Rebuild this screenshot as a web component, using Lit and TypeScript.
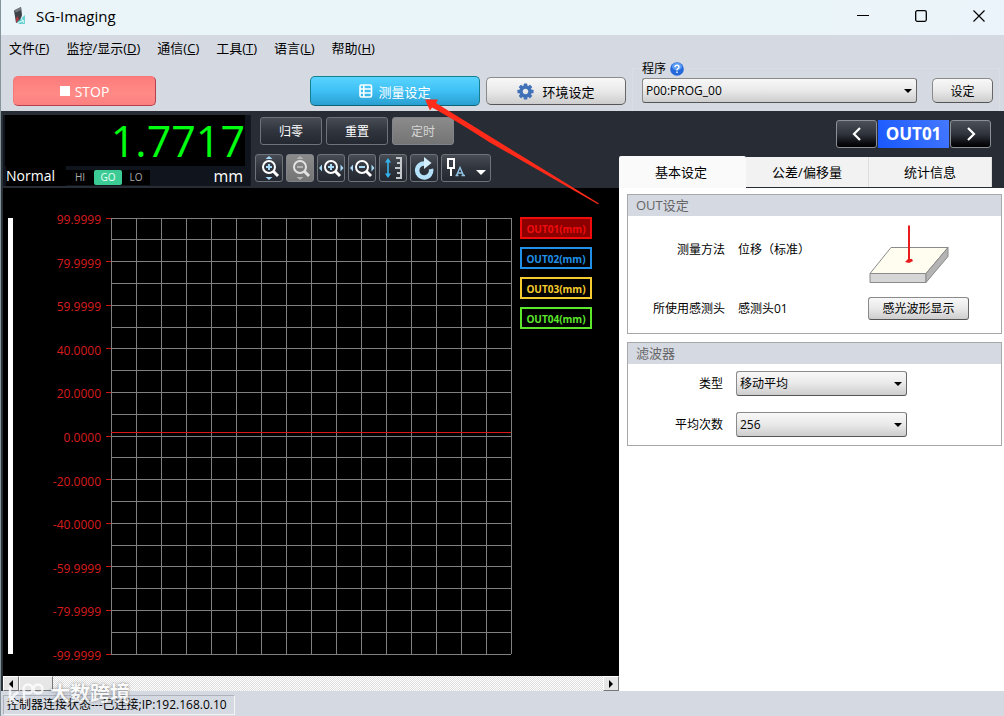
import { LitElement, html, css, svg, nothing } from "lit";
import { customElement, property, state } from "lit/decorators.js";
import { classMap } from "lit/directives/class-map.js";
import { styleMap } from "lit/directives/style-map.js";

const base = css`
  * { box-sizing: border-box; }
  button, select { font: inherit; margin: 0; padding: 0; cursor: default; }
  svg { display: block; }
  .silver {
    color: #000;
    border: 1px solid #777;
    border-color: #8a8a8a #666 #555 #8a8a8a;
    border-radius: 4px;
    background: linear-gradient(#f8f8f8, #e9e9e9 50%, #cdcdcd);
  }
`;

@customElement("sg-select")
export class SgSelect extends LitElement {
  @property() label = "";
  @property({ attribute: false }) options: string[] = [];

  static styles = [base, css`
    :host { display: grid; min-width: 0; }
    .box, .caret { grid-area: 1 / 1; }
    .box {
      appearance: none;
      width: 100%;
      height: 25px;
      padding: 0 20px 0 3px;
      border-radius: 3px;
      font-size: 12px;
    }
    .caret { justify-self: end; align-self: center; margin-right: 5px; pointer-events: none; }
  `];

  render() {
    return html`
      <select class="box silver" aria-label=${this.label}>
        ${this.options.map((o) => html`<option>${o}</option>`)}
      </select>
      <svg class="caret" width="8" height="4" viewBox="0 0 8 4"><path d="M0 0h8L4 4z" /></svg>
    `;
  }
}

@customElement("sg-header")
export class SgHeader extends LitElement {
  static styles = [base, css`
    :host { display: block; background: #d5d9e2; }
    .title {
      display: flex;
      align-items: center;
      gap: 12px;
      height: 35px;
      padding: 0 2px 3px 11px;
      background: linear-gradient(100deg, #eaf4f9, #e9f5f8 60%, #ebf4fa);
    }
    .name { display: flex; align-items: center; gap: 8px; flex: 1; font-size: 15px; line-height: 20px; }
    .win { width: 46px; height: 32px; border: 0; background: none; display: grid; place-items: center; }
    .menu { display: flex; gap: 17px; padding: 3px 8px; height: 26px; font-size: 13px; line-height: 20px; }
    .menu a { color: #000; text-decoration: none; white-space: nowrap; }
    .bar { display: grid; grid-template-columns: minmax(0, 1fr) 372px; height: 50px; }
    .left { display: flex; align-items: start; padding: 15px 6px 0 12px; }
    .stop, .measure, .env {
      display: flex;
      align-items: center;
      justify-content: center;
      gap: 5px;
      font-size: 13px;
      border-radius: 5px;
    }
    .stop {
      width: 143px;
      height: 30px;
      color: #fff;
      font-size: 14px;
      background: linear-gradient(#fc7c7c, #ff8a86 60%, #fb8080);
      border: 1px solid #f87878;
      border-right-color: #b8404c;
      border-bottom-color: #b8404c;
    }
    .call { position: relative; margin-left: auto; }
    .measure {
      width: 170px;
      height: 30px;
      color: #fff;
      border: 1px solid #157f92;
      border-bottom-color: #0c6478;
      background: linear-gradient(#58d4ff, #3fc0f4 50%, #2a9fd0);
    }
    .arrow { position: absolute; left: 115px; top: 22px; z-index: 5; pointer-events: none; }
    .env { width: 140px; height: 28px; margin: 1px 0 0 6px; gap: 8px; }
    .prog {
      margin: 7px 4px 0 0;
      border: 1px solid #dadde3;
      border-bottom: 0;
      padding: 9px 6px 0 9px;
      height: 43px;
      position: relative;
    }
    .legend {
      position: absolute;
      left: 9px;
      top: -8px;
      display: flex;
      align-items: center;
      gap: 4px;
      background: #d5d9e2;
      font-size: 12px;
      line-height: 16px;
      padding-right: 2px;
    }
    .row { display: flex; gap: 15px; align-items: center; }
    .row sg-select { flex: 1; }
    .set { width: 61px; height: 25px; font-size: 12px; border-radius: 5px; }
  `];

  private menus: [string, string][] = [
    ["文件", "F"], ["监控/显示", "D"], ["通信", "C"], ["工具", "T"], ["语言", "L"], ["帮助", "H"],
  ];

  render() {
    const teeth = [0, 45, 90, 135, 180, 225, 270, 315];
    return html`
      <div class="title">
        <span class="name">
          <svg width="16" height="18" viewBox="0 0 16 18">
            <path d="M2 3.500L9 0L10 8L8 14L4 16z" fill="#3c4147" />
            <path d="M2 3.500L9 0L9.300 3L4 5.500z" fill="#74797f" />
            <path d="M4 11l2-2 1 4-3 3z" fill="#a63a45" />
            <path d="M5 15L13 8V17H7z" fill="#4cc9c6" opacity=".8" />
            <path d="M6 15.500l6-2M9 11l3 5" stroke="#dcfafa" stroke-width="1" />
          </svg>
          SG-Imaging
        </span>
        <button class="win" aria-label="最小化"><svg width="12" height="12"><path d="M0 5.500h12" stroke="#000" /></svg></button>
        <button class="win" aria-label="最大化"><svg width="12" height="12"><rect x=".7" y=".7" width="10.600" height="10.600" rx="1.500" fill="none" stroke="#000" stroke-width="1.300" /></svg></button>
        <button class="win" aria-label="关闭"><svg width="12" height="12"><path d="M.5.500l11 11M11.500.500l-11 11" stroke="#000" stroke-width="1.200" /></svg></button>
      </div>
      <nav class="menu">
        ${this.menus.map(([t, k]) => html`<a href="#">${t}(<u>${k}</u>)</a>`)}
      </nav>
      <div class="bar">
        <div class="left">
          <button class="stop"><svg width="10" height="10"><rect width="10" height="10" fill="#fff" /></svg>STOP</button>
          <div class="call">
            <button class="measure">
              <svg width="14" height="14" viewBox="0 0 14 14" fill="none" stroke="#fff" stroke-width="1.600">
                <rect x="1" y="1" width="11.500" height="12" rx="1.500" /><path d="M4.800 1v12M1 5h11.500M1 9h11.500" />
              </svg>
              测量设定
            </button>
            <svg class="arrow" width="176" height="108" viewBox="0 0 176 108">
              <path d="M0 1.500L13 1.500L11 5L174 105.500L173 106.300L64 44Q30 22 7 9.500L5 12.500z" fill="#fe2a1a" />
            </svg>
          </div>
          <button class="env silver">
            <svg width="17" height="17" viewBox="-8.500 -8.500 17 17">
              ${teeth.map((a) => svg`<rect x="-1.800" y="-8" width="3.600" height="4" rx=".6" fill="#4070b8" transform="rotate(${a})" />`)}
              <circle r="4.500" fill="none" stroke="#4070b8" stroke-width="3.400" />
            </svg>
            环境设定
          </button>
        </div>
        <div class="prog">
          <span class="legend">程序
            <svg width="14" height="14" viewBox="0 0 14 14">
              <circle cx="7" cy="7" r="6.800" fill="#2468dc" /><ellipse cx="7" cy="4.500" rx="5" ry="3.800" fill="#5b9cf4" />
              <path d="M5 5.200Q5 3.300 7 3.300T9 5.200Q9 6.300 7.600 6.900Q7 7.200 7 8.400M7 9.600v1.500" fill="none" stroke="#fff" stroke-width="1.400" />
            </svg>
          </span>
          <div class="row">
            <sg-select label="程序" .options=${["P00:PROG_00"]}></sg-select>
            <button class="set silver">设定</button>
          </div>
        </div>
      </div>
    `;
  }
}

@customElement("sg-controls")
export class SgControls extends LitElement {
  static styles = [base, css`
    :host { display: flex; height: 77px; background: #282d35; padding: 4px 0 2px; }
    .read { width: 248px; background: #10151d; padding: 0 5px 0 2px; border-right: 1px solid #15191f; display: flex; flex-direction: column; }
    .value { height: 51px; background: #000; color: #0f1; font-size: 43px; line-height: 51px; text-align: right; }
    .line { display: flex; align-items: center; height: 21px; padding-left: 1px; color: #fff; }
    .mode { width: 60px; font-size: 14px; line-height: 20px; background: #000; }
    .lamps { display: flex; background: #000; height: 15px; margin-top: 2px; font-size: 10px; line-height: 15px; color: #aaa; text-align: center; }
    .lamps span { width: 28px; }
    .lamps .on { background: #3dcb95; color: #eafff6; border-radius: 2px; }
    .unit { margin-left: auto; padding-right: 2px; font-size: 16px; line-height: 20px; }
    .keys { display: grid; gap: 9px; padding: 2px 0 0 4px; align-content: start; }
    .big { display: flex; gap: 4px; padding-left: 5px; }
    .small { display: flex; gap: 3px; }
    .dark {
      border: 1px solid #6e737a;
      border-radius: 3px;
      background: linear-gradient(#474c55, #30353d 50%, #242830);
      color: #fff;
      height: 28px;
      font-size: 12px;
    }
    .big .dark { width: 62px; }
    .small .dark { width: 28px; display: grid; place-items: center; }
    .small .wide { width: 50px; display: flex; align-items: center; justify-content: space-between; padding: 0 4px; }
    .off.dark { background: linear-gradient(#8b8b8b, #747474); border-color: #80848a; color: #d4d4d4; }
  `];

  private zoom(plus: boolean, vertical: boolean, dim = false) {
    const c = dim ? "#e2e2e2" : "#fff";
    const b = dim ? "#b5b5b5" : "#a9dcf8";
    const marks = vertical
      ? svg`<path d="M9.500 4L13 1L16.500 4zM9.500 22L13 25L16.500 22z" fill=${b} />`
      : svg`<path d="M4 9.500L1 13L4 16.500zM22.500 9.500L25.500 13L22.500 16.500z" fill=${b} />`;
    return html`<svg width="26" height="26" viewBox="0 0 26 26">
      ${marks}
      <circle cx="13" cy="12" r="6" fill="none" stroke=${c} stroke-width="2" />
      <path d="M17.500 16.500l4.500 4.500" stroke=${c} stroke-width="3" />
      <path d="M10 12h6" stroke=${b} stroke-width="2" />
      ${plus ? svg`<path d="M13 9v6" stroke=${b} stroke-width="2" />` : nothing}
    </svg>`;
  }

  render() {
    return html`
      <div class="read">
        <div class="value">1.7717</div>
        <div class="line">
          <span class="mode">Normal</span>
          <span class="lamps"><span>HI</span><span class="on">GO</span><span>LO</span></span>
          <span class="unit">mm</span>
        </div>
      </div>
      <div class="keys">
        <div class="big">
          <button class="dark">归零</button><button class="dark">重置</button><button class="dark off">定时</button>
        </div>
        <div class="small">
          <button class="dark" aria-label="纵向放大">${this.zoom(true, true)}</button>
          <button class="dark off" aria-label="纵向缩小">${this.zoom(false, true, true)}</button>
          <button class="dark" aria-label="横向放大">${this.zoom(true, false)}</button>
          <button class="dark" aria-label="横向缩小">${this.zoom(false, false)}</button>
          <button class="dark" aria-label="自动刻度">
            <svg width="24" height="24" viewBox="0 0 24 24">
              <path d="M7 5v14" stroke="#35b4ee" stroke-width="1.600" /><path d="M4 6.500L7 2L10 6.500zM4 17.500L7 22L10 17.500z" fill="#35b4ee" />
              <path d="M15 2h5v20h-5M16 7h4M14 12h6M16 17h4" fill="none" stroke="#c4c7cb" stroke-width="2" />
            </svg>
          </button>
          <button class="dark" aria-label="刷新">
            <svg width="22" height="24" viewBox="0 0 22 24">
              <path d="M12 7.500A7 7 0 1 0 18 13" fill="none" stroke="#b5e2fa" stroke-width="4.500" />
              <path d="M11 1L18.500 7L11 13z" fill="#d4effd" />
            </svg>
          </button>
          <button class="dark wide" aria-label="标签">
            <svg width="20" height="22" viewBox="0 0 20 22">
              <path d="M2 2h6v9H2zM5 11v8" fill="none" stroke="#fff" stroke-width="2" />
              <path d="M10.500 18.500L14 10.500L17.500 18.500M11.800 16h4.500M9.500 18.500h3M15.500 18.500h3.500" fill="none" stroke="#93c6e4" stroke-width="1.400" />
            </svg>
            <svg width="10" height="16" viewBox="0 0 10 16"><path d="M0 10h10L5 15z" fill="#fff" /></svg>
          </button>
        </div>
      </div>
    `;
  }
}

@customElement("sg-chart")
export class SgChart extends LitElement {
  @state() private active = 0;

  static styles = [base, css`
    :host {
      display: grid;
      grid-template-columns: 5px 88px 5px minmax(0, 1fr) 72px;
      background: #000;
      padding: 30px 27px 22px 5px;
    }
    .level { background: #fff; }
    .scale {
      display: flex;
      flex-direction: column;
      justify-content: space-between;
      margin: -6px 0 -10px;
      color: #d81c1c;
      font-size: 12px;
      line-height: 16px;
      text-align: right;
    }
    .ticks { width: 5px; height: 100%; overflow: visible; margin-left: 5px; }
    .plot { width: calc(100% - 14px); height: 100%; overflow: visible; margin-left: 5px; }
    .keys { display: flex; flex-direction: column; gap: 8px; margin-top: -1px; }
    .key {
      height: 22px;
      padding-top: 1px;
      border: 2px solid;
      background: #000;
      font-size: 10px;
      line-height: 18px;
      font-weight: 700;
      white-space: nowrap;
      display: grid;
      place-content: center;
    }
    .key.on { background: #8c0000; }
  `];

  private ticks = ["99.9999", "79.9999", "59.9999", "40.0000", "20.0000", "0.0000", "-20.0000", "-40.0000", "-59.9999", "-79.9999", "-99.9999"];
  private series = [
    { name: "OUT01(mm)", color: "#f00c0c" },
    { name: "OUT02(mm)", color: "#2090e8" },
    { name: "OUT03(mm)", color: "#f4cc30" },
    { name: "OUT04(mm)", color: "#5ce62c" },
  ];

  render() {
    const steps = (n: number) => Array.from({ length: n + 1 }, (_, i) => `${(i * 100) / n}%`);
    return html`
      <div class="level"></div>
      <div class="scale">${this.ticks.map((t) => html`<span>${t}</span>`)}</div>
      <svg class="ticks">
        ${steps(10).map((y) => svg`<line x1="0" x2="100%" y1=${y} y2=${y} stroke="#c81818" shape-rendering="crispEdges" />`)}
      </svg>
      <svg class="plot">
        <g stroke="#808080" shape-rendering="crispEdges">
          ${steps(16).map((x) => svg`<line x1=${x} x2=${x} y1="0" y2="100%" />`)}
          ${steps(20).map((y) => svg`<line x1="0" x2="100%" y1=${y} y2=${y} />`)}
        </g>
        <line x1="0" x2="100%" y1="49.110%" y2="49.110%" stroke="#d81818" shape-rendering="crispEdges" />
      </svg>
      <div class="keys">
        ${this.series.map((s, i) => html`
          <button class=${classMap({ key: true, on: i === this.active })} style=${styleMap({ color: s.color, borderColor: s.color })}
            @click=${() => (this.active = i)}>${s.name}</button>`)}
      </div>
    `;
  }
}

@customElement("sg-panel")
export class SgPanel extends LitElement {
  @state() private tab = 0;

  static styles = [base, css`
    :host { display: flex; flex-direction: column; background: #fff; }
    .head { background: #282d35; padding-top: 9px; }
    .nav { display: flex; gap: 1px; justify-content: flex-end; padding-right: 13px; height: 28px; }
    .step {
      width: 41px;
      border: 1px solid #8c9096;
      border-radius: 3px;
      background: linear-gradient(#4b5059, #30343c 50%, #0b0c10 85%, #000);
      display: grid;
      place-items: center;
    }
    .out { width: 71px; background: linear-gradient(60deg, #1858ff, #4478ff); color: #fff; font-size: 17px; line-height: 28px; font-weight: 700; text-align: center; }
    .tabs { display: grid; grid-template-columns: 127fr 123fr 123fr; align-items: end; padding: 8px 12px 0 0; }
    .tab {
      height: 30px;
      margin-bottom: 1px;
      border: 0;
      border-right: 1px solid #ddd;
      background: #f2f2f2;
      font-size: 13px;
      line-height: 28px;
    }
    .tab.on { height: 32px; margin: 0; padding-right: 3px; background: #fafafa; border-radius: 2px 2px 0 0; border-right: 0; }
    .body { display: grid; gap: 8px; padding: 6px 2px 0 8px; }
    .group { border: 1px solid #a8a8a8; }
    .caption { margin: 0; padding-left: 8px; background: #d5d9e2; color: #666; font-size: 13px; font-weight: 400; line-height: 21px; }
    .grid { display: grid; align-items: center; font-size: 12px; line-height: 16px; }
    .info { grid-template-columns: 97px 117px 101px; gap: 14px 13px; padding: 0 0 13px; }
    .form { grid-template-columns: 95px 171px; gap: 16px 13px; padding: 7px 0 8px; }
    .key { text-align: right; }
    .wave { height: 23px; border-radius: 3px; white-space: nowrap; }
  `];

  render() {
    const tabs = ["基本设定", "公差/偏移量", "统计信息"];
    return html`
      <div class="head">
        <div class="nav">
          <button class="step" aria-label="上一个"><svg width="10" height="14"><path d="M8 1L2 7L8 13" fill="none" stroke="#fff" stroke-width="2.200" /></svg></button>
          <span class="out">OUT01</span>
          <button class="step" aria-label="下一个"><svg width="10" height="14"><path d="M2 1L8 7L2 13" fill="none" stroke="#fff" stroke-width="2.200" /></svg></button>
        </div>
        <div class="tabs" role="tablist">
          ${tabs.map((t, i) => html`<button role="tab" class=${classMap({ tab: true, on: i === this.tab })}
            aria-selected=${i === this.tab} @click=${() => (this.tab = i)}>${t}</button>`)}
        </div>
      </div>
      <div class="body">
        <section class="group">
          <h2 class="caption">OUT设定</h2>
          <div class="grid info">
            <span class="key">测量方法</span><span>位移（标准）</span>
            <svg width="82" height="67" viewBox="0 0 82 67">
              <path d="M23 31.500H80L58 57.500H2z" fill="#fffcf0" stroke="#8a8a8a" />
              <path d="M2 57.500H58V66.500H2z" fill="#d6d6d6" stroke="#8a8a8a" />
              <path d="M58 57.500L80 31.500V40.500L58 66.500z" fill="#b4b4b4" stroke="#8a8a8a" />
              <path d="M41 9.500V43" stroke="#e81c1c" stroke-width="2" />
              <path d="M37 46l3-3h4l1 2-4 2z" fill="#e81c1c" />
            </svg>
            <span class="key">所使用感测头</span><span>感测头01</span>
            <button class="wave silver">感光波形显示</button>
          </div>
        </section>
        <section class="group">
          <h2 class="caption">滤波器</h2>
          <div class="grid form">
            <span class="key">类型</span><sg-select label="类型" .options=${["移动平均"]}></sg-select>
            <span class="key">平均次数</span><sg-select label="平均次数" .options=${["256"]}></sg-select>
          </div>
        </section>
      </div>
    `;
  }
}

@customElement("app-root")
export class AppRoot extends LitElement {
  static styles = [base, css`
    :host {
      display: flex;
      flex-direction: column;
      min-height: 100vh;
      font-family: "Open Sans", "Noto Sans CJK SC", sans-serif;
      font-size: 12px;
      color: #000;
      background: #d5d9e2;
      border-left: 1px solid #84949a;
    }
    .main { flex: 1; display: grid; grid-template-columns: minmax(0, 1fr) 385px; border-left: 2px solid #2a3138; }
    .left { display: flex; flex-direction: column; }
    sg-chart { flex: 1; }
    .scroll { display: flex; height: 15px; background: repeating-conic-gradient(#fff 0 25%, #dedede 0 50%) 0 0 / 2px 2px; }
    .scroll button { border: 1px solid #fff; border-right-color: #777; border-bottom-color: #777; background: #e6e6e6; width: 16px; display: grid; place-items: center; }
    .scroll .thumb { width: 34px; margin-right: auto; }
    .status { height: 25px; padding: 4px 2px 1px; position: relative; display: flex; }
    .text { border: 1px solid #aeb2ba; border-right-color: #f4f4f4; border-bottom-color: #f4f4f4; padding: 0 7px 0 3px; font-size: 12px; line-height: 18px; white-space: nowrap; }
    .mark { position: absolute; left: 18px; top: -10px; display: flex; align-items: center; gap: 3px; color: #fff; opacity: 0.8; font-size: 20px; font-weight: 700; line-height: 26px; text-shadow: 0 0 3px #666; pointer-events: none; }
    .mark { left: 6px; }
  `];

  render() {
    return html`
      <sg-header></sg-header>
      <div class="main">
        <div class="left">
          <sg-controls></sg-controls>
          <sg-chart></sg-chart>
          <div class="scroll">
            <button aria-label="向左"><svg width="4" height="8"><path d="M4 0v8L0 4z" /></svg></button>
            <button class="thumb" aria-label="滚动"></button>
            <button aria-label="向右"><svg width="4" height="8"><path d="M0 0v8L4 4z" /></svg></button>
          </div>
        </div>
        <sg-panel></sg-panel>
      </div>
      <footer class="status">
        <span class="mark">
          <svg width="40" height="24" viewBox="0 0 40 24" fill="none" stroke="#fff" stroke-width="2.500">
            <path d="M3 5v17M11 10l-7 6l7 6M17 22V8" /><circle cx="21" cy="7" r="4.500" /><circle cx="31" cy="7" r="4.500" />
          </svg>
          大数跨境
        </span>
        <span class="text">控制器连接状态---已连接;IP:192.168.0.10</span>
      </footer>
    `;
  }
}
